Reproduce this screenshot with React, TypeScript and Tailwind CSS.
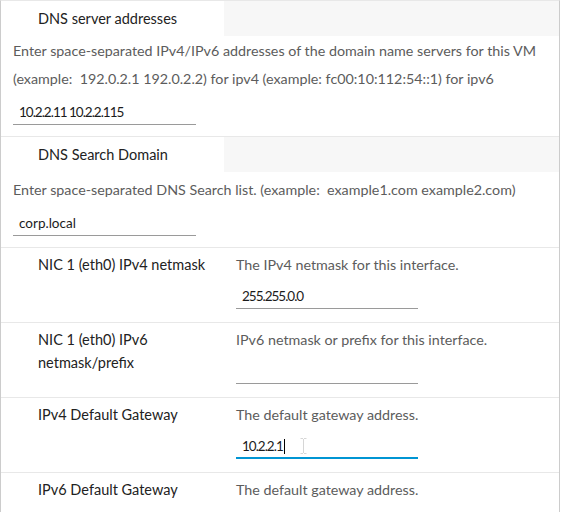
import React from "react";

const font = { fontFamily: "Lato, 'Open Sans', sans-serif" };

function Underlined({
  value,
  width,
  focused,
  numeric,
}: {
  value: string;
  width: string;
  focused?: boolean;
  numeric?: boolean;
}) {
  return (
    <div
      className={`relative h-6 ${width} ${
        focused ? "border-b-2 border-[#0095d3]" : "border-b border-[#9a9a9a]"
      } pl-[6px] flex items-center text-[13.5px] text-[#1b1b1b]`}
    >
      <span className={numeric ? "tracking-[-1px]" : ""}>{value}</span>
      {focused && (
        <>
          <span className="ml-[1px] inline-block h-[15px] w-[1px] bg-black" />
          <svg
            className="ml-[15px]"
            width="7"
            height="16"
            viewBox="0 0 7 16"
            fill="none"
            stroke="#d6d6d6"
            strokeWidth="1"
          >
            <path d="M0.5 0.5h2.5M4 0.5h2.5M3.5 1v14M0.5 15.5h2.5M4 15.5h2.5" />
          </svg>
        </>
      )}
    </div>
  );
}

function Section({
  title,
  desc,
  value,
  numeric,
  descPad,
}: {
  title: string;
  desc: React.ReactNode;
  value: string;
  numeric?: boolean;
  descPad: string;
}) {
  return (
    <div className="border-b border-[#e8e8e8] pb-[11px]">
      <div className="flex h-[35px]">
        <div className="w-[223px] pl-[37px] flex items-center text-[14.5px] text-[#222222]">
          {title}
        </div>
        <div className="flex-1 bg-[#f7f7f7]" />
      </div>
      <div className={`pl-3 ${descPad} text-[14.3px] leading-[28px] text-[#5c5c5c]`}>
        {desc}
      </div>
      <div className="pl-3 mt-[8px]">
        <Underlined value={value} width="w-[183px]" numeric={numeric} />
      </div>
    </div>
  );
}

function Row({
  label,
  desc,
  value,
  focused,
  last,
}: {
  label: React.ReactNode;
  desc: string;
  value?: string;
  focused?: boolean;
  last?: boolean;
}) {
  return (
    <div
      className={`grid grid-cols-[235px_1fr] pt-[5px] ${
        last ? "" : "border-b border-[#e8e8e8] pb-[13px]"
      }`}
    >
      <div className="pl-[37px] text-[14.5px] leading-[23px] text-[#222222]">
        {label}
      </div>
      <div>
        <div className="text-[14.3px] leading-[23px] text-[#5c5c5c]">{desc}</div>
        {value !== undefined && (
          <div className="mt-[9px]">
            <Underlined
              value={value}
              width="w-[182px]"
              focused={focused}
              numeric
            />
          </div>
        )}
      </div>
    </div>
  );
}

export default function App() {
  return (
    <div className="h-[512px] w-[563px] overflow-hidden bg-white" style={font}>
      <div className="w-[560px] border-t border-l border-r border-t-[#e8e8e8] border-l-[#cccccc] border-r-[#cccccc] min-h-[512px]">
        <Section
          title="DNS server addresses"
          descPad="pt-[1px]"
          desc={
            <>
              <div>
                Enter space-separated IPv4/IPv6 addresses of the domain name
                servers for this VM
              </div>
              <div>
                (example:&nbsp; 192.0.2.1 192.0.2.2) for ipv4 (example:
                fc00:10:112:54::1) for ipv6
              </div>
            </>
          }
          value="10.2.2.11 10.2.2.115"
          numeric
        />
        <Section
          title="DNS Search Domain"
          descPad="pt-[4px]"
          desc={
            <div>
              Enter space-separated DNS Search list. (example:&nbsp;
              example1.com example2.com)
            </div>
          }
          value="corp.local"
        />
        <Row
          label="NIC 1 (eth0) IPv4 netmask"
          desc="The IPv4 netmask for this interface."
          value="255.255.0.0"
        />
        <Row
          label={
            <>
              <div>NIC 1 (eth0) IPv6</div>
              <div>netmask/prefix</div>
            </>
          }
          desc="IPv6 netmask or prefix for this interface."
          value=""
        />
        <Row
          label="IPv4 Default Gateway"
          desc="The default gateway address."
          value="10.2.2.1"
          focused
        />
        <Row
          label="IPv6 Default Gateway"
          desc="The default gateway address."
          last
        />
      </div>
    </div>
  );
}
